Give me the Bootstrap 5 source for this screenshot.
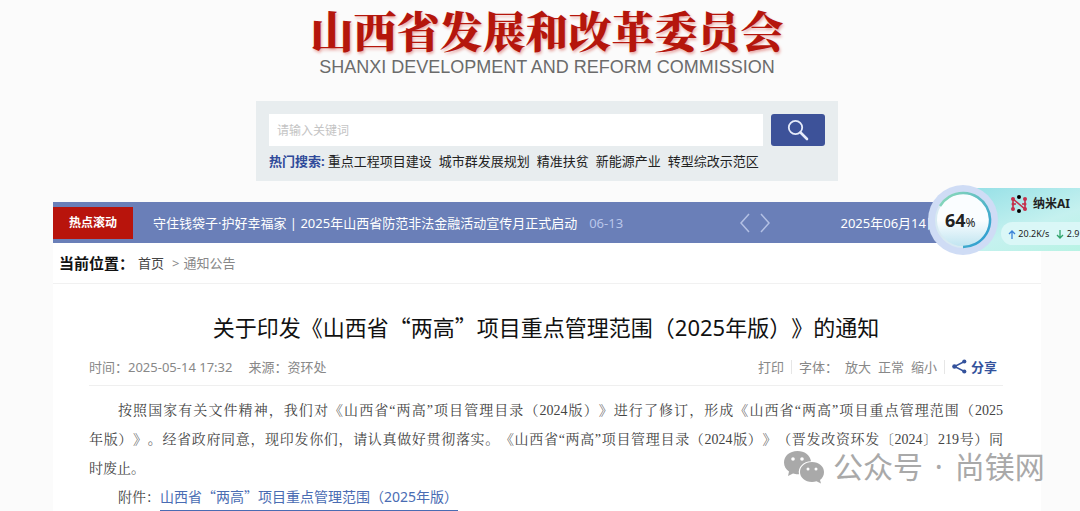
<!DOCTYPE html>
<html lang="zh-CN">
<head>
<meta charset="utf-8">
<meta name="viewport" content="width=device-width, initial-scale=1">
<title>山西省发展和改革委员会</title>
<link rel="stylesheet" href="https://cdn.jsdelivr.net/npm/bootstrap@5.3.0/dist/css/bootstrap.min.css">
<style>
html{scrollbar-width:none}
body{background:#fbfbfb;font-family:"Noto Sans","Noto Sans CJK SC",sans-serif;font-size:13px;line-height:20px;color:#222;overflow-x:hidden;text-spacing-trim:space-all}
a{color:inherit;text-decoration:none}
.page-wrap{padding-left:53px;padding-right:39px}
.site-name{font-family:"Noto Serif CJK SC","Noto Sans CJK SC",serif;font-weight:900;font-size:43px;line-height:50px;padding-top:5px;color:#b5160c;text-shadow:1px 2px 3px #e9a8a4}
.site-en{font-family:"Liberation Sans",sans-serif;font-size:18px;line-height:20px;color:#6b6b6b;margin-top:2px}
.search-box{width:582px;height:80px;background:#e8edef;margin-top:24px;padding:13px 13px 0}
.search-box .form-control{height:32px;font-size:12px;padding:4px 8px;color:#333;background:#fff}
.search-box .form-control::placeholder{color:#c4c4c4}
.search-btn{width:54px;height:32px;background:#3d5299;border-radius:3px;flex:none}
.hot-words{gap:7px;margin-top:5px}
.hot-label{color:#2f4a9a;font-weight:700;margin-right:-4px}
.ticker{height:41px;background:#6a7fb8;color:#fff;margin-top:21px}
.ticker-tag{width:80px;height:32px;line-height:32px;background:#b8140c;font-weight:700;font-size:12px}
.ticker-date{color:#b9c6ea;margin-left:12px}
.ticker-nav{margin-right:54px}
.ticker-today{margin:0 102px 0 16px}
.arrow-btn{background:none;border:0;padding:0;line-height:0}
.panel{background:#fff}
.crumbs{height:41px;border-bottom:1px solid #f1f1f1;padding-left:6px;color:#888}
.crumb-label{font-size:15px;font-weight:700;color:#111;margin-right:4px}
.crumb-home{color:#444}
.article{padding:0 38px 24px 36px}
.doc-title{font-size:22px;line-height:32px;font-weight:400;color:#111;margin:26px 0 0}
.wide-q{font-family:"Noto Sans CJK SC",sans-serif}
.meta-bar{height:43px;border-bottom:1px solid #efefef;color:#888;padding-top:5px}
.meta-tools{gap:7px;padding-right:6px}
.sep{width:1px;height:14px;background:#e6e6e6}
.share{color:#34529c;font-weight:700;gap:4px}
.doc-body{font-family:"Liberation Serif","Noto Serif CJK SC","Noto Sans CJK SC",serif;font-size:14px;line-height:29px;color:#444;margin-top:10px}
.full-line{display:block;text-align-last:justify;white-space:nowrap}
.indent{padding-left:29px}
.doc-link{font-family:"Noto Sans","Noto Sans CJK SC",sans-serif;color:#4a6cb3;border-bottom:1px solid #4a6cb3;line-height:27px;display:inline-block}
.ai-widget{top:185px;right:0;width:152px;height:70px}
.ai-panel{left:34px;right:0;top:3px;height:63px;background:linear-gradient(160deg,#93dfe6,#c5f1ef 60%,#b8f3e4);color:#1c2b38}
.ai-name{left:105px;top:9px;font-size:12px;font-weight:700}
.ai-logo{left:82px;top:10px}
.ai-speed{left:73px;right:0;top:37px;height:23px;line-height:23px;border-radius:12px 0 0 12px;background:#daf7f7;font-size:9px;padding-left:7px;white-space:nowrap}
.ai-num{left:17px;top:22px;width:36px;font-size:18px;line-height:26px;font-weight:700;color:#222;white-space:nowrap}
.ai-num small{font-size:12px;font-weight:400}
.wechat-mark{left:783px;top:447px;color:#a9a9a9;font-size:30px;line-height:40px;gap:8px;white-space:nowrap}
.mark-dot{margin:0 4px}
</style>
</head>
<body>
<div class="page-wrap position-relative">
  <header class="text-center">
    <h1 class="site-name mb-0">山西省发展和改革委员会</h1>
    <div class="site-en">SHANXI DEVELOPMENT AND REFORM COMMISSION</div>
  </header>
  <form class="search-box mx-auto">
    <div class="d-flex gap-2">
      <input class="form-control border-0 rounded-0" type="text" placeholder="请输入关键词" aria-label="请输入关键词">
      <button class="btn search-btn p-0 d-flex align-items-center justify-content-center" type="button" aria-label="搜索">
        <svg width="22" height="22" viewBox="0 0 22 22" fill="none" stroke="#e6ebfa"><circle cx="8.500" cy="8.500" r="6.700" stroke-width="1.800"/><path d="M13.500 13.500 20 20" stroke-width="2.600" stroke-linecap="round"/></svg>
      </button>
    </div>
    <div class="hot-words d-flex text-nowrap">
      <span class="hot-label">热门搜索:</span>
      <a href="#">重点工程项目建设</a><a href="#">城市群发展规划</a><a href="#">精准扶贫</a><a href="#">新能源产业</a><a href="#">转型综改示范区</a>
    </div>
  </form>
  <div class="ticker d-flex align-items-center text-nowrap">
    <div class="ticker-tag text-center">热点滚动</div>
    <a class="ms-3 ps-1" href="#">守住钱袋子·护好幸福家 | 2025年山西省防范非法金融活动宣传月正式启动</a>
    <span class="ticker-date">06-13</span>
    <div class="ticker-nav ms-auto d-flex gap-2">
      <button class="arrow-btn" type="button" aria-label="上一条"><svg width="12" height="20" viewBox="0 0 12 20" fill="none" stroke="#b3c0e4" stroke-width="1.500"><path d="M10 1 2 10l8 9"/></svg></button>
      <button class="arrow-btn" type="button" aria-label="下一条"><svg width="12" height="20" viewBox="0 0 12 20" fill="none" stroke="#b3c0e4" stroke-width="1.500"><path d="m2 1 8 9-8 9"/></svg></button>
    </div>
    <span class="ticker-today">2025年06月14日</span>
  </div>
  <main class="panel">
    <nav class="crumbs d-flex align-items-center" aria-label="当前位置">
      <span class="crumb-label">当前位置：</span><a class="crumb-home" href="#">首页</a><span class="mx-1 ps-1">&gt;</span><a href="#">通知公告</a>
    </nav>
    <article class="article">
      <h2 class="doc-title text-center text-nowrap">关于印发《山西省<span class="wide-q">“两高”</span>项目重点管理范围（2025年版）》的通知</h2>
      <div class="meta-bar d-flex align-items-center text-nowrap">
        <span>时间：2025-05-14 17:32</span><span class="ms-3">来源：资环处</span>
        <div class="meta-tools ms-auto d-flex align-items-center">
          <a href="#">打印</a><span class="sep"></span><span>字体：</span>
          <a href="#">放大</a><a href="#">正常</a><a href="#">缩小</a><span class="sep"></span>
          <a class="share d-flex align-items-center" href="#"><svg width="15" height="15" viewBox="0 0 15 15" fill="#34529c"><path d="M12.500 2.500 2.500 7.500l10 5" fill="none" stroke="#34529c" stroke-width="1.400"/><circle cx="12.300" cy="2.500" r="2.100"/><circle cx="2.500" cy="7.500" r="2.300"/><circle cx="12.300" cy="12.500" r="2.100"/></svg>分享</a>
        </div>
      </div>
      <div class="doc-body">
        <p class="mb-0"><span class="full-line indent">按照国家有关文件精神，我们对《山西省“两高”项目管理目录（2024版）》进行了修订，形成《山西省“两高”项目重点管理范围（2025</span><span class="full-line">年版）》。经省政府同意，现印发你们，请认真做好贯彻落实。《山西省“两高”项目管理目录（2024版）》（晋发改资环发〔2024〕219号）同</span>时废止。</p>
        <p class="mb-0 indent">附件：<a class="doc-link" href="#">山西省<span class="wide-q">“两高”</span>项目重点管理范围（2025年版）</a></p>
      </div>
    </article>
  </main>
  <aside class="ai-widget position-absolute" aria-label="纳米AI">
    <div class="ai-panel position-absolute"></div>
    <svg class="position-absolute top-0 start-0" width="70" height="70" viewBox="0 0 70 70" fill="none">
      <defs><linearGradient id="ring" x1="0" y1="0" x2="1" y2="1"><stop offset="0" stop-color="#8fdcb8"/><stop offset="1" stop-color="#2497d4"/></linearGradient><linearGradient id="dial" x1="0" y1="0" x2="0" y2="1"><stop offset="0.500" stop-color="#fafdff"/><stop offset="1" stop-color="#bfe4f0"/></linearGradient></defs>
      <circle cx="35" cy="35" r="35" fill="#cfdcf5"/><circle cx="35" cy="35" r="27" fill="url(#dial)" stroke="#d8eaf2" stroke-width="2"/>
      <path d="M12 21A27 27 0 1 1 35 62" stroke="url(#ring)" stroke-width="2.500"/>
    </svg>
    <span class="ai-num position-absolute">64<small>%</small></span>
    <svg class="ai-logo position-absolute" width="18" height="18" viewBox="0 0 18 18"><path d="M3 14V4l12 10V4M3 9h3m6 0h3" fill="none" stroke="#c5304c" stroke-width="1.600"/><g fill="#c5304c"><circle cx="3" cy="4" r="2"/><circle cx="3" cy="9" r="1.500"/><circle cx="3" cy="14" r="2"/><circle cx="15" cy="4" r="2"/><circle cx="15" cy="9" r="1.500"/><circle cx="15" cy="14" r="2"/></g><circle cx="9" cy="2" r="2"/><circle cx="9" cy="16" r="2"/></svg>
    <span class="ai-name position-absolute text-nowrap">纳米AI</span>
    <div class="ai-speed position-absolute"><svg width="8" height="9" viewBox="0 0 8 9" fill="none" stroke="#3b82d8" stroke-width="1.300"><path d="M4 9V1M1 4l3-3 3 3"/></svg> 20.2K/s &nbsp;&nbsp;<svg width="8" height="9" viewBox="0 0 8 9" fill="none" stroke="#2fa36a" stroke-width="1.300"><path d="M4 0v8M1 5l3 3 3-3"/></svg> 2.9</div>
  </aside>
  <div class="wechat-mark position-absolute d-flex align-items-center">
    <svg width="42" height="34" viewBox="0 0 42 34"><path d="M14.500 1C6.500 1 1 6 1 12.500c0 4 2 7 5 9L5 26l5-2.500c2 .6 3.500.8 6 .7-1.500-7 4.500-13 12-13C27 5 21.500 1 14.500 1Z" fill="#a9a9a9"/><path d="M29 12c-7 0-12 4.500-12 10s5 10 12 10c1.500 0 3-.2 4.500-.7L38 33.500 37 30c2.600-2 4-4.600 4-8 0-5.500-5-10-12-10Z" fill="#a9a9a9"/><g fill="#fff"><circle cx="10" cy="9" r="1.800"/><circle cx="19" cy="9" r="1.800"/><circle cx="25" cy="19" r="1.500"/><circle cx="33" cy="19" r="1.500"/></g></svg>
    <span>公众号 <span class="mark-dot">·</span> 尚镁网</span>
  </div>
</div>
<script src="https://cdn.jsdelivr.net/npm/bootstrap@5.3.0/dist/js/bootstrap.bundle.min.js"></script>
</body>
</html>
